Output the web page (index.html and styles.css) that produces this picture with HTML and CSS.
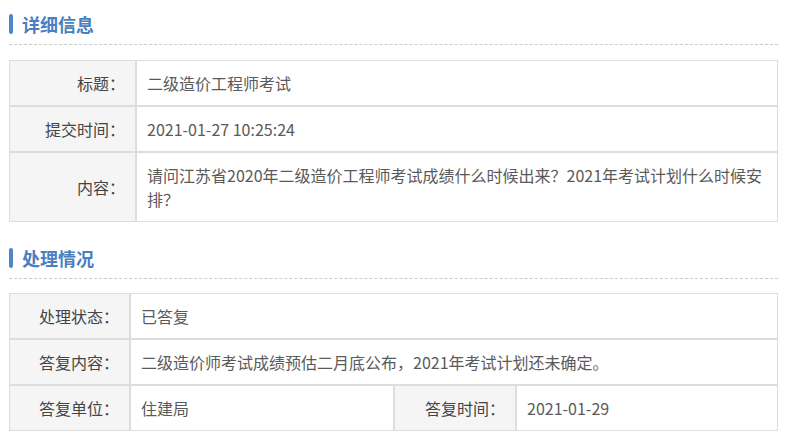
FILE: index.html
```html
<!DOCTYPE html>
<html lang="zh-CN">
<head>
    <meta charset="UTF-8">
    <title>详细信息</title>
    <link rel="stylesheet" href="styles.css">
</head>
<body>
    <div class="page">
        <div class="section-title"><span class="bar"></span>详细信息</div>
        <table class="info-table detail">
            <colgroup>
                <col class="col-label">
                <col>
            </colgroup>
            <tr>
                <td class="label">标题：</td>
                <td>二级造价工程师考试</td>
            </tr>
            <tr>
                <td class="label">提交时间：</td>
                <td>2021-01-27 10:25:24</td>
            </tr>
            <tr>
                <td class="label">内容：</td>
                <td>请问江苏省2020年二级造价工程师考试成绩什么时候出来？2021年考试计划什么时候安排？</td>
            </tr>
        </table>

        <div class="section-title second"><span class="bar"></span>处理情况</div>
        <table class="info-table reply">
            <colgroup>
                <col class="c1">
                <col class="c2">
                <col class="c3">
                <col>
            </colgroup>
            <tr>
                <td class="label">处理状态：</td>
                <td colspan="3">已答复</td>
            </tr>
            <tr>
                <td class="label">答复内容：</td>
                <td colspan="3">二级造价师考试成绩预估二月底公布，2021年考试计划还未确定。</td>
            </tr>
            <tr>
                <td class="label">答复单位：</td>
                <td>住建局</td>
                <td class="label">答复时间：</td>
                <td>2021-01-29</td>
            </tr>
        </table>
    </div>
</body>
</html>
```

FILE: styles.css
```css
body {
    margin: 0;
    font-family: "Noto Sans CJK SC", "Noto Sans", sans-serif;
    font-size: 16px;
    color: #5a5a5a;
    background: #fff;
}
.page {
    padding: 4px 7px 0 9px;
}
.section-title {
    display: flex;
    align-items: center;
    height: 40px;
    border-bottom: 1px dashed #ccc;
    font-size: 18px;
    font-weight: bold;
    color: #4a7fc0;
}
.section-title.second {
    margin-top: 16px;
}
.bar {
    display: inline-block;
    width: 4px;
    height: 20px;
    margin-right: 9px;
    border-radius: 2px;
    background-color: #4f86c5;
}
.info-table {
    width: 100%;
    margin-top: 15px;
    table-layout: fixed;
    border-collapse: separate;
    border-spacing: 0;
}
.info-table.reply {
    margin-top: 14px;
}
.info-table td {
    border: 1px solid #ddd;
    padding: 10px;
    line-height: 24px;
    vertical-align: middle;
}
.info-table td.label {
    background-color: #f5f5f5;
    color: #444;
    text-align: right;
}
.detail .col-label { width: 127px; }
.reply .c1 { width: 121px; }
.reply .c2 { width: 264px; }
.reply .c3 { width: 122px; }
```
